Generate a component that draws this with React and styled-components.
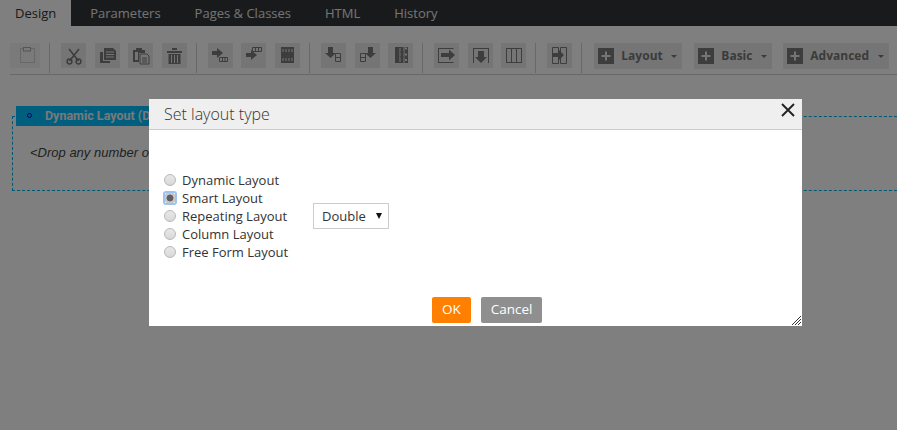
import React from 'react';
import styled, { createGlobalStyle } from 'styled-components';

const Global = createGlobalStyle`
html, body { margin: 0; padding: 0; background: #fff; }
body { width: 897px; height: 430px; overflow: hidden; font-family: "Open Sans", "Liberation Sans", sans-serif; }
`;

const Page = styled.div`
width: 897px;
height: 430px;
position: relative;
overflow: hidden;
background: #fff;
`;

const TabBar = styled.div`
display: flex;
height: 26px;
background: #333538;
`;

const Tab = styled.div`
padding: 0 ${props => props.$active ? '15px' : '17px'};
margin-right: ${props => props.$active ? '2px' : '0'};
line-height: 26px;
font-size: 13px;
background: ${props => props.$active ? '#fff' : 'transparent'};
color: ${props => props.$active ? '#333' : '#e8e8e8'};
`;

const Toolbar = styled.div`
display: flex;
align-items: flex-start;
height: 49px;
margin-left: 10px;
padding-top: 17px;
box-sizing: border-box;
border-bottom: 1px solid #d0d0d0;
`;

const Group = styled.div`
display: flex;
gap: 8.6px;
`;

const Separator = styled.div`
width: 1px;
height: 30px;
background: #d0d0d0;
margin: 0 11px 0 9px;
`;

const IconButton = styled.div`
width: ${props => props.$disabled ? 30 : 25}px;
height: 25px;
background: ${props => props.$disabled ? '#f4f4f4' : '#ebebeb'};
display: flex;
`;

const MenuButton = styled.div`
display: flex;
align-items: center;
width: ${props => props.$width}px;
height: 26px;
margin: 0 ${props => props.$gap}px 0 ${props => props.$left || 0}px;
padding: 0 0 2px 4px;
box-sizing: border-box;
background: #ebebeb;
color: #777;
font-size: 12px;
font-weight: 700;
`;

const PlusBox = styled.div`
width: 16px;
height: 16px;
margin: 2px 7px 0 0;
background: #7b7b7b;
display: flex;
`;

const Caret = styled.div`
margin: 2px 5px 0 auto;
border-left: 3px solid transparent;
border-right: 3px solid transparent;
border-top: 3px solid #777;
`;

const Canvas = styled.div`
padding: 41px 0 0 12px;
`;

const DashedBox = styled.div`
height: 75px;
margin-right: -20px;
border: 1px dashed #00aee6;
box-sizing: border-box;
`;

const SectionHeader = styled.div`
display: flex;
align-items: center;
width: 300px;
height: 20px;
margin: -11px 0 0 3px;
padding: 0 0 1px 29px;
box-sizing: border-box;
background: #00bfff;
color: #f2f2f2;
font: 700 12.5px Roboto, "Liberation Sans", sans-serif;
position: relative;
`;

const Bullet = styled.span`
position: absolute;
left: 11px;
top: 7px;
width: 3px;
height: 3px;
border: 1px solid #0000c8;
border-radius: 50%;
`;

const DropHint = styled.div`
margin: 19px 0 0 17px;
font: italic 13px "Liberation Sans", Arial, sans-serif;
color: #444;
`;

const Overlay = styled.div`
position: absolute;
inset: 0;
background: rgba(0,0,0,0.5);
`;

const Modal = styled.div`
position: absolute;
left: 149px;
top: 99px;
width: 653px;
height: 227px;
background: #fff;
display: flex;
flex-direction: column;
`;

const ModalHeader = styled.div`
height: 31px;
box-sizing: border-box;
padding-left: 15px;
background: #efefef;
border-bottom: 1px solid #ccc;
font-size: 16px;
font-weight: 300;
line-height: 30px;
color: #333;
`;

const CloseButton = styled.svg`
position: absolute;
right: 6px;
top: 3px;
`;

const ResizeGrip = styled.svg`
position: absolute;
right: 1px;
bottom: 1px;
`;

const ModalBody = styled.div`
display: flex;
align-items: center;
padding: 41px 0 0 15px;
`;

const RadioList = styled.div`
width: 149px;
display: flex;
flex-direction: column;
`;

const RadioRow = styled.label`
display: flex;
align-items: center;
height: 18px;
font-size: 13px;
color: #333;
`;

const Radio = styled.input`
appearance: none;
width: 12px;
height: 12px;
margin: 0;
border: 1px solid #b8b8b8;
border-radius: 50%;
box-sizing: border-box;
background: linear-gradient(#e8e8e8, #d8d8d8);
&:checked {
  background: radial-gradient(circle, #606060 0 3px, #c4c4c4 3.8px, #e4e4e4 100%);
}
`;

const FocusRing = styled.span`
display: flex;
margin-right: 6px;
outline: ${props => props.$on ? '2px solid #9cc2f2' : 'none'};
outline-offset: -1px;
border-radius: 2px;
`;

const SelectBox = styled.div`
display: flex;
align-items: center;
justify-content: space-between;
width: 76px;
height: 26px;
padding: 0 6px 0 8px;
box-sizing: border-box;
border: 1px solid #ccc;
font-size: 13px;
color: #333;
`;

const SelectArrow = styled.span`
border-left: 3px solid transparent;
border-right: 3px solid transparent;
border-top: 6px solid #111;
`;

const Footer = styled.div`
display: flex;
justify-content: center;
gap: 10px;
margin-top: auto;
padding: 0 0 3px 23px;
`;

const Button = styled.div`
height: 26px;
width: ${props => props.$width}px;
border-radius: 2px;
background: ${props => props.$primary ? '#ff7f00' : '#8f8f8f'};
color: #fff;
font-size: 13.5px;
line-height: 24px;
text-align: center;
`;

const D = '#7a7a7a';

const icons = {
  empty: <>
    <rect x="10.5" y="5.5" width="14" height="14" fill="none" stroke="#aaa" strokeDasharray="1 1" />
    <rect x="13.5" y="4.5" width="7" height="3.5" fill="#f4f4f4" stroke="#aaa" />
  </>,
  cut: <>
    <path d="M8 6l9.5 12M18 6L8.5 18" stroke={D} strokeWidth="1.6" fill="none" />
    <circle cx="8.5" cy="18.5" r="2.4" fill="none" stroke={D} strokeWidth="1.5" />
    <circle cx="17.5" cy="18.5" r="2.4" fill="none" stroke={D} strokeWidth="1.5" />
  </>,
  copy: <>
    <path d="M5 9h3v9h7v2H5z" fill={D} />
    <path d="M9 5h9l3 3v9H9z" fill={D} />
    <path d="M11 9h8M11 11.5h8M11 14h8" stroke="#ebebeb" />
  </>,
  paste: <>
    <path d="M5 7h3V5h6v2h3v3h-6v9H5z" fill={D} />
    <rect x="7" y="9" width="3" height="8" fill="#ebebeb" />
    <path d="M12 11h7l2 2v8H12z" fill="#ebebeb" stroke={D} />
    <path d="M14 15h5M14 17h5M14 19h5" stroke={D} />
  </>,
  trash: <>
    <path d="M5 8h15v2H5zM10 5h5v2h-5z" fill={D} />
    <path d="M6.5 11h12v10h-12z" fill={D} />
    <path d="M9.5 12v8M12.5 12v8M15.5 12v8" stroke="#ebebeb" />
  </>,
  rowBelow: <>
    <path d="M4 8h5V5l6 5-6 5v-3H4z" fill={D} />
    <path d="M11.5 14.5h8v4h-8zM14.5 14.5v4M17 14.5v4" fill="none" stroke={D} />
  </>,
  rowAbove: <>
    <path d="M5 10h5V7l6 5-6 5v-3H5z" fill={D} />
    <path d="M11.5 4.5h9v4h-9zM14.5 4.5v4M17.5 4.5v4" fill="#ebebeb" stroke={D} />
  </>,
  rowGrid: <>
    <rect x="6" y="4" width="13" height="16" fill={D} />
    <path d="M8 6v3M11 6v3M14 6v3M17 6v3M8 15v3M11 15v3M14 15v3M17 15v3" stroke="#ebebeb" />
  </>,
  colLeft: <>
    <path d="M7 4h5v6h3l-5.5 5L4 10h3z" fill={D} />
    <path d="M14.5 10.5h5v8h-5zM14.5 14.5h5" fill="none" stroke={D} />
  </>,
  colRight: <>
    <path d="M5.5 10.5h5v8h-5zM5.5 14.5h5" fill="none" stroke={D} />
    <path d="M13 4h5v6h3l-5.5 5L10 10h3z" fill={D} />
  </>,
  colGrid: <>
    <rect x="7" y="4" width="13" height="16" fill={D} />
    <path d="M12 5v14M16 4v16" stroke="#ebebeb" />
    <path d="M12 9h4M12 14h4" stroke={D} />
    <path d="M17 9h2M17 14h2" stroke={D} />
    <path d="M17 5.5h2M17 11.5h2M17 17h2" stroke="#ebebeb" strokeWidth="2" />
  </>,
  boxRight: <>
    <path d="M4.5 5.5h15M4.5 5v15M4.5 19.5h15" fill="none" stroke={D} />
    <path d="M7 10h8V6.5l6 5.5-6 5.5V14H7z" fill={D} />
  </>,
  boxDown: <>
    <path d="M5.5 5.5h15M5.5 5v15M20.5 5v15" fill="none" stroke={D} />
    <path d="M10 8h6v6h3l-6 6-6-6h3z" fill={D} />
  </>,
  columns: <>
    <path d="M5 5.5h16M5 19.5h16M5.5 5.5v14M10.5 5.5v14M15.5 5.5v14M20.5 5.5v14" fill="none" stroke={D} />
  </>,
  merge: <>
    <path d="M5.5 4.5h6v16h-6zM13.5 4.5h6v16h-6z" fill="none" stroke={D} />
    <path d="M5 10h7V7l5 5-5 5v-3H5z" fill={D} />
  </>,
};

function Icon({ name, disabled }) {
  const w = disabled ? 30 : 25;
  return (
    <IconButton $disabled={disabled}>
      <svg width={w} height="25" viewBox={`0 0 ${w} 25`}>{icons[name]}</svg>
    </IconButton>
  );
}

function Menu({ label, width, gap, left }) {
  return (
    <MenuButton $width={width} $gap={gap} $left={left}>
      <PlusBox>
        <svg width="16" height="16" viewBox="0 0 16 16">
          <path d="M8 3.5v9M3.5 8h9" stroke="#ebebeb" strokeWidth="2" />
        </svg>
      </PlusBox>
      {label}
      <Caret />
    </MenuButton>
  );
}

const groups = [
  ['cut', 'copy', 'paste', 'trash'],
  ['rowBelow', 'rowAbove', 'rowGrid'],
  ['colLeft', 'colRight', 'colGrid'],
  ['boxRight', 'boxDown', 'columns'],
  ['merge'],
];

const layouts = ['Dynamic Layout', 'Smart Layout', 'Repeating Layout', 'Column Layout', 'Free Form Layout'];

export default function App() {
  return (
    <Page>
      <Global />
      <TabBar>
        <Tab $active>Design</Tab>
        <Tab>Parameters</Tab>
        <Tab>Pages &amp; Classes</Tab>
        <Tab>HTML</Tab>
        <Tab>History</Tab>
      </TabBar>
      <Toolbar>
        <Icon name="empty" disabled />
        <Separator />
        {groups.map(g => (
          <React.Fragment key={g[0]}>
            <Group>{g.map(n => <Icon key={n} name={n} />)}</Group>
            <Separator />
          </React.Fragment>
        ))}
        <Menu label="Layout" width={88} gap={12} left={1} />
        <Menu label="Basic" width={78} gap={11} />
        <Menu label="Advanced" width={106} gap={0} />
      </Toolbar>
      <Canvas>
        <DashedBox>
          <SectionHeader><Bullet />Dynamic Layout (Default)</SectionHeader>
          <DropHint>&lt;Drop any number of items here&gt;</DropHint>
        </DashedBox>
      </Canvas>
      <Overlay />
      <Modal>
        <ModalHeader>Set layout type</ModalHeader>
        <CloseButton width="16" height="16" viewBox="0 0 16 16">
          <path d="M2 2l12 12M14 2L2 14" stroke="#222" strokeWidth="1.9" />
        </CloseButton>
        <ModalBody>
          <RadioList>
            {layouts.map(l => (
              <RadioRow key={l}>
                <FocusRing $on={l === 'Smart Layout'}>
                  <Radio type="radio" name="layout" defaultChecked={l === 'Smart Layout'} />
                </FocusRing>
                {l}
              </RadioRow>
            ))}
          </RadioList>
          <SelectBox>Double<SelectArrow /></SelectBox>
        </ModalBody>
        <Footer>
          <Button $primary $width={39}>OK</Button>
          <Button $width={61}>Cancel</Button>
        </Footer>
        <ResizeGrip width="9" height="9" viewBox="0 0 9 9">
          <path d="M0 9l9-9M3 9l6-6M6 9l3-3" stroke="#333" strokeWidth="1" />
        </ResizeGrip>
      </Modal>
    </Page>
  );
}
